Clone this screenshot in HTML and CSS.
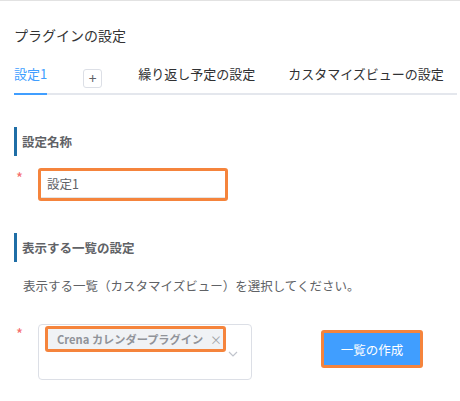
FILE: index.html
```html
<!DOCTYPE html>
<html lang="ja">
<head>
<meta charset="utf-8">
<link rel="stylesheet" href="styles.css">
</head>
<body>
<div class="page">
  <h1 class="title">プラグインの設定</h1>
  <div class="tabs">
    <div class="tab active"><span class="tab-label">設定1</span></div>
    <div class="tab"><span class="add-btn">+</span></div>
    <div class="tab"><span class="tab-label">繰り返し予定の設定</span></div>
    <div class="tab"><span class="tab-label">カスタマイズビューの設定</span></div>
  </div>

  <section class="section">
    <div class="section-head">設定名称</div>
    <div class="form-row">
      <span class="req">*</span>
      <div class="hl input-hl"><div class="input">設定1</div></div>
    </div>
  </section>

  <section class="section">
    <div class="section-head">表示する一覧の設定</div>
    <p class="desc">表示する一覧（カスタマイズビュー）を選択してください。</p>
    <div class="form-row">
      <span class="req">*</span>
      <div class="select">
        <div class="select-tags">
          <div class="hl tag-hl"><span class="tag">Crena カレンダープラグイン<span class="tag-close">×</span></span></div>
        </div>
        <div class="select-arrow">
          <svg width="10" height="6" viewBox="0 0 10 6"><path d="M1 1 L5 5 L9 1" fill="none" stroke="#c0c4cc" stroke-width="1.2"/></svg>
        </div>
      </div>
      <div class="hl btn-hl"><button class="btn">一覧の作成</button></div>
    </div>
  </section>
</div>
</body>
</html>
```

FILE: styles.css
```css
html, body {
  margin: 0;
  padding: 0;
  background: #fff;
}
body {
  font-family: "Noto Sans CJK JP", "Noto Sans", sans-serif;
  color: #303133;
}
.page {
  border-top: 1px solid #e2e2e2;
  padding: 0 3px 0 14px;
  overflow: hidden;
}
.title {
  margin: 0;
  padding-top: 24px;
  font-size: 14px;
  line-height: 20px;
  font-weight: normal;
  color: #333;
}
.tabs {
  display: flex;
  margin-top: 10px;
  height: 40px;
  box-shadow: inset 0 -2px 0 #e4e7ed;
}
.tab {
  display: flex;
  flex-shrink: 0;
  align-items: center;
  padding: 0 18px;
  font-size: 13px;
  color: #303133;
  white-space: nowrap;
}
.tab:first-child {
  padding-left: 0;
}
.tab:last-child {
  padding-left: 15px;
}
.tab-label {
  display: block;
  height: 40px;
  line-height: 38px;
  box-sizing: border-box;
}
.tab.active .tab-label {
  color: #409eff;
  border-bottom: 2px solid #409eff;
}
.add-btn {
  display: flex;
  align-items: center;
  justify-content: center;
  width: 19px;
  height: 19px;
  box-sizing: border-box;
  border: 1px solid #dcdfe6;
  border-radius: 3px;
  margin-top: 6px;
  font-size: 14px;
  line-height: 1;
  color: #606266;
}
.section {
  margin-top: 32px;
}
.section-head {
  height: 29px;
  line-height: 29px;
  border-left: 3px solid #1f6ea6;
  padding-left: 5px;
  font-size: 12.5px;
  font-weight: bold;
  color: #606266;
}
.form-row {
  display: flex;
  align-items: flex-start;
  margin-top: 12px;
}
.req {
  width: 22px;
  padding-left: 2px;
  font-size: 15px;
  line-height: 15px;
  margin-top: 2px;
  color: #f56c6c;
}
.hl {
  border: 3px solid #f5843c;
  border-radius: 3px;
  box-sizing: border-box;
}
.input-hl {
  width: 190px;
  height: 33px;
}
.input {
  height: 27px;
  line-height: 26px;
  box-sizing: border-box;
  border-bottom: 1px solid #e4e4e4;
  padding-left: 6px;
  font-size: 12.5px;
  color: #606266;
}
.desc {
  margin: 14px 0 0;
  padding-left: 9px;
  font-size: 12.5px;
  line-height: 20px;
  color: #606266;
}
.section .desc + .form-row {
  margin-top: 28px;
}
.select {
  display: flex;
  align-items: center;
  width: 214px;
  height: 56px;
  box-sizing: border-box;
  border: 1px solid #dcdfe6;
  border-radius: 4px;
}
.select-tags {
  flex: 1;
  align-self: flex-start;
  padding: 1px 0 0 6px;
}
.tag-hl {
  width: 181px;
  height: 26px;
}
.tag {
  display: flex;
  align-items: center;
  height: 20px;
  background: #f0f2f5;
  padding-left: 9px;
  font-size: 11.2px;
  font-weight: bold;
  color: #909399;
  white-space: nowrap;
}
.tag-close {
  margin-left: 7px;
  font-weight: normal;
  font-size: 12px;
  color: #a0a3a8;
}
.select-arrow {
  display: flex;
  padding: 4px 13px 0 0;
}
.btn-hl {
  margin: 6px 0 0 69px;
  width: 102px;
  height: 38px;
}
.btn {
  display: block;
  width: 100%;
  height: 100%;
  border: none;
  background: #409eff;
  color: #fff;
  font-family: inherit;
  font-size: 12.5px;
  padding: 0;
  margin: 0;
}
```
